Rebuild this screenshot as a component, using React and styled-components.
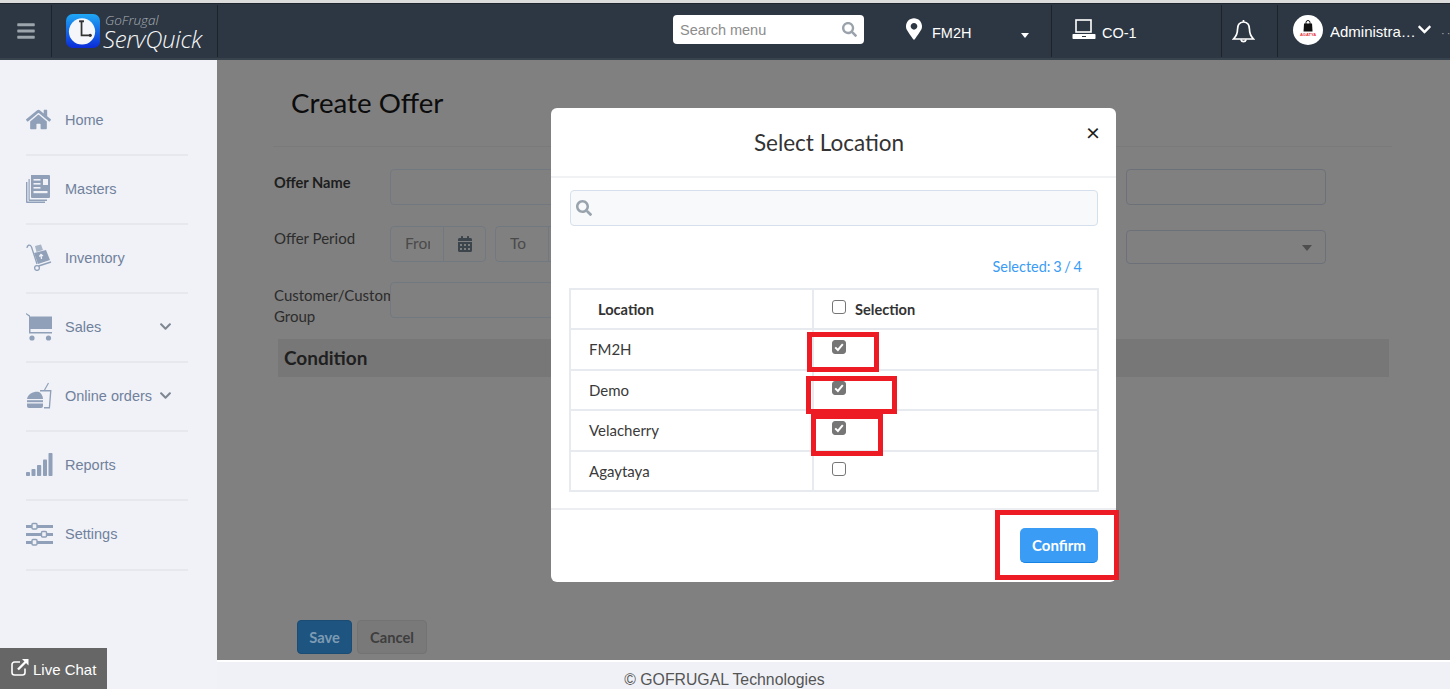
import React from "react";
import styled, { createGlobalStyle } from "styled-components";
import {
  FaBars,
  FaCalendarAlt,
  FaChevronDown,
  FaHome,
  FaMapMarkerAlt,
  FaSearch,
} from "react-icons/fa";

const Global = createGlobalStyle`
  html, body { margin: 0; padding: 0; background: #f0f1f7; }
  * { box-sizing: border-box; }
`;

const Page = styled.div`
  position: relative;
  width: 1450px;
  height: 689px;
  overflow: hidden;
  display: flex;
  flex-direction: column;
  font-family: "Liberation Sans", Arial, sans-serif;
  background: #f0f1f7;
  border-top: 3px solid #dcdcdc;
`;

const Header = styled.header`
  height: 57px;
  flex: none;
  display: flex;
  align-items: stretch;
  background: #2d3743;
  border-top: 1px solid #20262e;
  border-bottom: 2px solid #39434e;
  color: #fff;
`;

const HeadCell = styled.div`
  width: ${(p) => p.$w}px;
  flex: none;
  display: flex;
  align-items: center;
  padding-left: ${(p) => p.$pad || 0}px;
  border-right: ${(p) => (p.$noLine ? "none" : "1px solid #1d232b")};
  margin: 1px 0;
`;

const Burger = styled(FaBars)`
  color: #9ca4ac;
  width: 20px;
  height: 20px;
`;

const LogoMark = styled.svg`
  width: 34px;
  height: 34px;
  flex: none;
`;

const LogoText = styled.div`
  display: flex;
  flex-direction: column;
  margin-left: 3px;
  font-family: "Open Sans", sans-serif;
  font-style: italic;
  font-weight: 300;
`;

const LogoTop = styled.span`
  font-size: 13.5px;
  line-height: 14px;
  color: #aab0b6;
  padding-left: 2px;
  margin-top: 1px;
`;

const LogoMain = styled.span`
  font-size: 24px;
  line-height: 24px;
  letter-spacing: -0.3px;
  color: #f6f8fa;
`;

const Spacer = styled.div`
  flex: 1;
`;

const SearchMenu = styled.div`
  width: 191px;
  height: 29px;
  flex: none;
  display: flex;
  align-items: center;
  justify-content: space-between;
  align-self: center;
  padding: 0 7px;
  background: #fff;
  border-radius: 4px;
  color: #8c8c8c;
  font-size: 14.5px;
  margin-top: -3px;
  margin-right: 42px;
`;

const SearchGlyph = styled(FaSearch)`
  width: 15px;
  height: 15px;
  color: #9aa3ab;
`;

const Pin = styled(FaMapMarkerAlt)`
  width: 16px;
  height: 22px;
  margin-top: -5px;
  color: #fff;
`;

const HeadText = styled.span`
  font-size: 14.5px;
  color: #fff;
  margin-left: ${(p) => p.$ml || 0}px;
  margin-top: 3px;
`;

const HeadCaret = styled.span`
  width: 0;
  height: 0;
  margin-left: 50px;
  margin-top: 8px;
  border-left: 4.5px solid transparent;
  border-right: 4.5px solid transparent;
  border-top: 5px solid #fff;
`;

const Monitor = styled.svg`
  width: 24px;
  height: 22px;
  margin-top: -3px;
  flex: none;
`;

const BellIcon = styled.svg`
  width: 23px;
  height: 25px;
  flex: none;
  margin-top: 1px;
`;

const Avatar = styled.div`
  width: 30px;
  height: 30px;
  border-radius: 50%;
  background: #fff;
  flex: none;
  display: flex;
  flex-direction: column;
  align-items: center;
  padding-top: 5px;
  margin-top: -2px;
`;

const AvatarBag = styled.svg`
  width: 10px;
  height: 12px;
  flex: none;
`;

const AvatarName = styled.span`
  font-size: 4px;
  line-height: 6px;
  font-weight: 700;
  color: #e8323c;
`;

const UserName = styled.span`
  width: 87px;
  flex: none;
  margin-left: 7px;
  font-size: 15px;
  white-space: nowrap;
  overflow: hidden;
  text-overflow: ellipsis;
`;

const UserChevron = styled(FaChevronDown)`
  width: 15px;
  height: 15px;
  flex: none;
  margin-top: -3px;
`;

const MoreDots = styled.span`
  flex: none;
  margin-left: 9px;
  margin-top: 3px;
  color: #aab0b6;
  font-size: 11px;
  letter-spacing: 2px;
`;

const Body = styled.div`
  flex: 1;
  min-height: 0;
  display: flex;
`;

const Sidebar = styled.nav`
  width: 217px;
  flex: none;
  padding: 27px 29px 0 26px;
  background: #f0f2f8;
`;

const NavItem = styled.div`
  height: 69px;
  display: flex;
  align-items: center;
  border-bottom: 2px solid #e6e8ee;
  color: #71819b;
  font-size: 14.5px;
  padding-bottom: 2px;

  &:last-child {
    height: 70px;
  }
`;

const NavIcon = styled.span`
  width: 39px;
  flex: none;
  display: flex;
  color: #8fa0b8;
`;

const NavChevron = styled(FaChevronDown)`
  width: 13px;
  height: 13px;
  color: #7f8791;
  margin-left: auto;
  margin-right: 16px;
`;

const Right = styled.div`
  flex: 1;
  min-width: 0;
  display: flex;
  flex-direction: column;
`;

const Main = styled.main`
  position: relative;
  flex: 1;
  min-height: 0;
  display: flex;
  flex-direction: column;
  padding: 0 58px 6px 56px;
  background: #808080;
  font-family: Lato, sans-serif;
  color: #262626;
`;

const PageHead = styled.div`
  height: 87px;
  flex: none;
  padding: 26px 0 0 18px;
  border-bottom: 1px solid #7a7a7a;
`;

const PageTitle = styled.h1`
  margin: 0;
  font-size: 27.7px;
  line-height: 34px;
  font-weight: 400;
  color: #0c0c0c;
`;

const FormRow = styled.div`
  display: flex;
  align-items: flex-start;
  margin-top: ${(p) => p.$top}px;
`;

const FieldLabel = styled.label`
  width: 117px;
  flex: none;
  padding-top: ${(p) => p.$pt || 3}px;
  padding-left: 1px;
  font-size: ${(p) => (p.$bold ? 14.6 : 15)}px;
  line-height: 21px;
  font-weight: ${(p) => (p.$bold ? 700 : 400)};
  color: ${(p) => (p.$bold ? "#1d1d1d" : "#2c2c2c")};
  overflow: hidden;
`;

const TextBox = styled.div`
  width: ${(p) => p.$w || 400}px;
  height: 36px;
  flex: none;
  border: 1px solid #727880;
  border-radius: 4px;
`;

const DateGroup = styled.div`
  display: flex;
  width: 96px;
  height: 36px;
  flex: none;
  margin-right: 9px;
  border: 1px solid #727880;
  border-radius: 4px;
  font-size: 15.5px;
  color: #4a4a4a;
`;

const DateInput = styled.span`
  width: 53px;
  flex: none;
  padding: 6px 13px 0 14px;
  line-height: 20px;
  border-right: 1px solid #727880;
`;

const DateValue = styled.span`
  display: block;
  overflow: hidden;
  white-space: nowrap;
`;

const DateAddon = styled.span`
  flex: 1;
  display: flex;
  align-items: center;
  justify-content: center;
  color: #3c444c;
`;

const SideField = styled.div`
  width: 200px;
  height: ${(p) => p.$h}px;
  margin: ${(p) => p.$mt || 0}px 66px 0 auto;
  flex: none;
  display: flex;
  align-items: center;
  justify-content: flex-end;
  padding-right: 13px;
  border: 1px solid #6c7179;
  border-radius: 4px;
`;

const SelectCaret = styled.span`
  width: 0;
  height: 0;
  margin-top: 2px;
  border-left: 5.5px solid transparent;
  border-right: 5.5px solid transparent;
  border-top: 6px solid #4e4e4e;
`;

const SectionBar = styled.div`
  height: 38px;
  margin: 12px 3px 0 5px;
  padding-left: 6px;
  background: #777;
  font-size: 19px;
  line-height: 38px;
  font-weight: 700;
  color: #1f1f1f;
`;

const Actions = styled.div`
  display: flex;
  gap: 5px;
  margin-top: auto;
  padding-left: 24px;
`;

const GhostButton = styled.div`
  width: ${(p) => (p.$primary ? 55 : 70)}px;
  height: 34px;
  display: flex;
  align-items: center;
  justify-content: center;
  border-radius: 4px;
  font-size: 14.7px;
  font-weight: 700;
  background: ${(p) => (p.$primary ? "#1d5480" : "#797979")};
  color: ${(p) => (p.$primary ? "#7d9bb3" : "#3e3e3e")};
  border: 1px solid ${(p) => (p.$primary ? "#1a4c74" : "#737373")};
`;

const Modal = styled.section`
  position: absolute;
  left: 334px;
  top: 48px;
  width: 565px;
  height: 474px;
  display: flex;
  flex-direction: column;
  background: #fff;
  border-radius: 6px;
  color: #333;
`;

const ModalHead = styled.div`
  position: relative;
  height: 70px;
  flex: none;
  display: flex;
  align-items: center;
  justify-content: center;
  padding-top: 1px;
  border-bottom: 2px solid #f1f2f4;
`;

const ModalTitle = styled.h2`
  margin: 0 0 0 -9px;
  font-size: 22.5px;
  font-weight: 400;
  color: #333;
`;

const CloseMark = styled.span`
  position: absolute;
  right: 16px;
  top: 11px;
  font-size: 24px;
  line-height: 26px;
  font-weight: 400;
  color: #1c1c1c;
`;

const ModalBody = styled.div`
  flex: 1;
  padding: 12px 18px 0 19px;
`;

const ModalSearch = styled.div`
  height: 36px;
  display: flex;
  align-items: center;
  padding-left: 5px;
  background: #f8f9fa;
  border: 1px solid #d6e0ec;
  border-radius: 4px;
`;

const ModalSearchGlyph = styled(FaSearch)`
  width: 16px;
  height: 16px;
  color: #98a3ad;
`;

const Counter = styled.div`
  height: 62px;
  padding: 31px 16px 0 0;
  text-align: right;
  font-size: 14.5px;
  word-spacing: -1px;
  line-height: 20px;
  color: #3a9cf5;
`;

const LocTable = styled.table`
  width: 528px;
  margin-left: -1px;
  border-collapse: collapse;
  table-layout: fixed;
  font-size: 15px;
`;

const HeadCellT = styled.th`
  height: 40px;
  padding: 0 0 0 ${(p) => p.$pl || 27}px;
  text-align: left;
  font-size: 14.6px;
  font-weight: 700;
  color: #333;
  border: 2px solid #e7eaee;
`;

const Cell = styled.td`
  height: ${(p) => p.$h}px;
  padding: 0 0 1px 18px;
  border: 2px solid #e7eaee;
  color: #3a3a3a;
`;

const HeadCheck = styled.span`
  display: inline-flex;
  align-items: center;
  gap: 9px;
`;

const Check = styled.span`
  display: flex;
  align-items: center;
  justify-content: center;
  width: 14px;
  height: 14px;
  flex: none;
  margin-top: ${(p) => p.$mt || 0}px;
  border-radius: 3px;
  background: ${(p) => (p.$on ? "#767676" : "#fff")};
  border: 1px solid #767676;
`;

const ModalFoot = styled.div`
  height: 74px;
  flex: none;
  display: flex;
  align-items: flex-start;
  justify-content: flex-end;
  padding: 18px 18px 0 0;
  border-top: 2px solid #eceef1;
`;

const ConfirmButton = styled.button`
  width: 78px;
  height: 35px;
  padding: 0;
  background: #3a9cf5;
  border: none;
  border-bottom: 1px solid #1582e4;
  border-radius: 5px;
  color: #fff;
  font-family: Lato, sans-serif;
  font-size: 15px;
  font-weight: 700;
`;

const Callout = styled.div`
  position: absolute;
  left: ${(p) => p.$x}px;
  top: ${(p) => p.$y}px;
  width: ${(p) => p.$w}px;
  height: ${(p) => p.$h}px;
  border: 5px solid #ed1c24;
  pointer-events: none;
`;

const Footer = styled.footer`
  height: 29px;
  flex: none;
  display: flex;
  align-items: center;
  justify-content: center;
  background: #f0f1f7;
  border-top: 2px solid #fff;
  font-size: 15.8px;
  color: #555;
  padding: 8px 218px 0 0;
`;

const LiveChat = styled.div`
  position: absolute;
  left: 0;
  bottom: 0;
  width: 107px;
  height: 41px;
  display: flex;
  align-items: center;
  gap: 4px;
  padding: 2px 0 0 11px;
  background: #666;
  color: #fff;
  font-size: 15px;
`;

const ChatIcon = styled.svg`
  width: 18px;
  height: 18px;
  flex: none;
  margin-top: -5px;
`;

const Tick = () => (
  <svg width="10" height="10" viewBox="0 0 10 10">
    <path d="M1.2 5.4 L3.9 8 L8.8 2.2" fill="none" stroke="#fff" strokeWidth="2" />
  </svg>
);

const MastersIcon = () => (
  <svg width="25" height="28" viewBox="0 0 25 28" fill="#8fa0b8">
    <path d="M5 0h18a1 1 0 0 1 1 1v21a1 1 0 0 1-1 1H6a1 1 0 0 1-1-1z" />
    <path d="M2.5 4h1.2v20.5H21V26H3.5a1 1 0 0 1-1-1z" />
    <path d="M0 7h1.4v19.5H19V28H1a1 1 0 0 1-1-1z" />
    <g fill="#f0f2f8">
      <rect x="7.5" y="4" width="7" height="1.6" />
      <rect x="7.5" y="8" width="7" height="1.6" />
      <rect x="7.5" y="12" width="7" height="1.6" />
      <rect x="17" y="4" width="5" height="6" />
      <rect x="7.5" y="16" width="14" height="2.2" />
    </g>
  </svg>
);

const InventoryIcon = () => (
  <svg width="26" height="27" viewBox="0 0 26 27" fill="none">
    <path d="M1 4 C1 1 4 0 5.5 3 L11 20" stroke="#8fa0b8" strokeWidth="1.3" />
    <path d="M12.5 22 L25 18" stroke="#8fa0b8" strokeWidth="1.5" />
    <circle cx="11" cy="24" r="2.4" stroke="#8fa0b8" strokeWidth="1.3" />
    <path d="M8 9 L20 6 L24 16 L12 20 Z" fill="#8fa0b8" />
    <path d="M9 2 L15 0.5 L17 6 L10.5 8 Z" fill="#a8b5c7" />
    <path d="M15.5 15 L15 11 M13.3 12.5 L15 10.5 L17 12" stroke="#f0f2f8" strokeWidth="1.3" />
  </svg>
);

const CartIcon = () => (
  <svg width="27" height="28" viewBox="0 0 27 28" fill="#8fa0b8">
    <path d="M0 0 L4 2.5 L4 3.5 L26 3.5 L26 16 L4.5 16 L4.5 19 L26 19 L26 20.5 L3 20.5 L3 3.5 L0 1.2 Z" />
    <circle cx="6" cy="25" r="2.6" />
    <circle cx="22.5" cy="25" r="2.6" />
  </svg>
);

const OrdersIcon = () => (
  <svg width="26" height="28" viewBox="0 0 26 28" fill="#8fa0b8">
    <path d="M1 17 C2 11 9 9 13 10 C15 11 17 14 17 17 Z" />
    <rect x="1" y="18.2" width="16" height="2" />
    <path d="M1 21.5 H17 V24 Q17 26 15 26 H3 Q1 26 1 24 Z" />
    <path d="M14 8 H25.5 L24 26.5 H18 L18 25 H22.8 L24 9.5 H14 Z" />
    <path d="M18.5 8 L22.5 1" stroke="#8fa0b8" strokeWidth="1.2" fill="none" />
  </svg>
);

const ReportsIcon = () => (
  <svg width="27" height="24" viewBox="0 0 27 24" fill="#8fa0b8">
    <rect x="0" y="19" width="4" height="4" rx="0.8" />
    <rect x="5.5" y="16" width="4" height="7" rx="0.8" />
    <rect x="11" y="12" width="4.2" height="11" rx="0.8" />
    <rect x="17" y="6.5" width="4" height="16.5" rx="0.8" />
    <rect x="22.5" y="0" width="4" height="23" rx="0.8" />
  </svg>
);

const SettingsIcon = () => (
  <svg width="27" height="24" viewBox="0 0 27 24">
    <g fill="#8fa0b8">
      <rect x="0" y="3" width="27" height="3" />
      <rect x="0" y="11" width="27" height="3" />
      <rect x="0" y="19" width="27" height="3" />
    </g>
    <g fill="#f0f2f8" stroke="#8fa0b8" strokeWidth="1.4">
      <rect x="6" y="1.5" width="5" height="5.5" rx="1" />
      <rect x="15.5" y="9.5" width="5" height="5.5" rx="1" />
      <rect x="6" y="17.5" width="5" height="5.5" rx="1" />
    </g>
  </svg>
);

const navItems = [
  ["Home", <FaHome key="h" size={25} />],
  ["Masters", <MastersIcon key="m" />],
  ["Inventory", <InventoryIcon key="i" />],
  ["Sales", <CartIcon key="s" />, true],
  ["Online orders", <OrdersIcon key="o" />, true],
  ["Reports", <ReportsIcon key="r" />],
  ["Settings", <SettingsIcon key="t" />],
];

const rows = [
  ["FM2H", 41, true],
  ["Demo", 40, true],
  ["Velacherry", 41, true],
  ["Agaytaya", 40, false],
];

export default function App() {
  return (
    <Page>
      <Global />
      <Header>
        <HeadCell $w={52} $pad={16}>
          <Burger />
        </HeadCell>
        <HeadCell $w={166} $pad={14}>
          <LogoMark viewBox="0 0 35 35">
            <defs>
              <linearGradient id="lg" x1="0" y1="0" x2="0" y2="1">
                <stop offset="0" stopColor="#1fa8f5" />
                <stop offset="1" stopColor="#0a2bd8" />
              </linearGradient>
            </defs>
            <rect width="35" height="35" rx="7" fill="url(#lg)" />
            <circle cx="16.5" cy="18" r="13.5" fill="#f4f6fa" />
            <path d="M16 8v14h9" fill="none" stroke="#333" strokeWidth="1.8" />
            <rect x="13.5" y="6.5" width="5" height="2" fill="#333" />
            <circle cx="25" cy="22" r="1.6" fill="#333" />
          </LogoMark>
          <LogoText>
            <LogoTop>GoFrugal</LogoTop>
            <LogoMain>ServQuick</LogoMain>
          </LogoText>
        </HeadCell>
        <Spacer />
        <SearchMenu>
          Search menu
          <SearchGlyph />
        </SearchMenu>
        <HeadCell $w={146}>
          <Pin />
          <HeadText $ml={10}>FM2H</HeadText>
          <HeadCaret />
        </HeadCell>
        <HeadCell $w={170} $pad={20}>
          <Monitor viewBox="0 0 24 22">
            <rect x="4" y="1" width="15" height="12" fill="none" stroke="#fff" strokeWidth="1.6" />
            <rect x="0.5" y="15" width="23" height="5" rx="0.8" fill="#fff" />
            <rect x="10" y="17" width="4" height="1" fill="#2d3743" />
          </Monitor>
          <HeadText $ml={6}>CO-1</HeadText>
        </HeadCell>
        <HeadCell $w={56} $pad={10}>
          <BellIcon viewBox="0 0 23 25" fill="none" stroke="#fff" strokeWidth="1.7">
            <path d="M11.5 3 C7 3 5.5 6.5 5.5 10.5 C5.5 15 4.5 17 1.5 20 H21.5 C18.5 17 17.5 15 17.5 10.5 C17.5 6.5 16 3 11.5 3 Z" />
            <path d="M11.5 3 V1" />
            <path d="M8.8 20.5 a2.8 2.8 0 0 0 5.4 0" />
          </BellIcon>
        </HeadCell>
        <HeadCell $w={172} $pad={15} $noLine>
          <Avatar>
            <AvatarBag viewBox="0 0 10 12">
              <path d="M1 3.5 H9 L9.5 11.5 H0.5 Z" fill="#111" />
              <path d="M3 4 V2.5 a2 2 0 0 1 4 0 V4" fill="none" stroke="#111" strokeWidth="1" />
            </AvatarBag>
            <AvatarName>AGATYA</AvatarName>
          </Avatar>
          <UserName>Administrator</UserName>
          <UserChevron />
          <MoreDots>··</MoreDots>
        </HeadCell>
      </Header>
      <Body>
        <Sidebar>
          {navItems.map(([label, icon, sub]) => (
            <NavItem key={label}>
              <NavIcon>{icon}</NavIcon>
              {label}
              {sub && <NavChevron />}
            </NavItem>
          ))}
        </Sidebar>
        <Right>
          <Main>
            <PageHead>
              <PageTitle>Create Offer</PageTitle>
            </PageHead>
            <FormRow $top={22}>
              <FieldLabel $bold>Offer Name</FieldLabel>
              <TextBox />
              <SideField $h={36} />
            </FormRow>
            <FormRow $top={21}>
              <FieldLabel $pt={2}>Offer Period</FieldLabel>
              <DateGroup>
                <DateInput>
                  <DateValue>From</DateValue>
                </DateInput>
                <DateAddon>
                  <FaCalendarAlt size={16} />
                </DateAddon>
              </DateGroup>
              <DateGroup>
                <DateInput>
                  <DateValue>To</DateValue>
                </DateInput>
                <DateAddon />
              </DateGroup>
              <SideField $h={34} $mt={4}>
                <SelectCaret />
              </SideField>
            </FormRow>
            <FormRow $top={18}>
              <FieldLabel>Customer/Customer Group</FieldLabel>
              <TextBox />
            </FormRow>
            <SectionBar>Condition</SectionBar>
            <Actions>
              <GhostButton $primary>Save</GhostButton>
              <GhostButton>Cancel</GhostButton>
            </Actions>
            <Modal>
              <ModalHead>
                <ModalTitle>Select Location</ModalTitle>
                <CloseMark>×</CloseMark>
              </ModalHead>
              <ModalBody>
                <ModalSearch>
                  <ModalSearchGlyph />
                </ModalSearch>
                <Counter>Selected: 3 / 4</Counter>
                <LocTable>
                  <colgroup>
                    <col width="243" />
                    <col width="285" />
                  </colgroup>
                  <thead>
                    <tr>
                      <HeadCellT>Location</HeadCellT>
                      <HeadCellT $pl={18}>
                        <HeadCheck>
                          <Check $mt={-4} />
                          Selection
                        </HeadCheck>
                      </HeadCellT>
                    </tr>
                  </thead>
                  <tbody>
                    {rows.map(([name, h, on]) => (
                      <tr key={name}>
                        <Cell $h={h}>{name}</Cell>
                        <Cell $h={h}>
                          <Check $on={on} $mt={-4}>
                            {on && <Tick />}
                          </Check>
                        </Cell>
                      </tr>
                    ))}
                  </tbody>
                </LocTable>
              </ModalBody>
              <ModalFoot>
                <ConfirmButton>Confirm</ConfirmButton>
              </ModalFoot>
              <Callout $x={256} $y={224} $w={72} $h={40} />
              <Callout $x={255} $y={268} $w={91} $h={38} />
              <Callout $x={260} $y={306} $w={72} $h={42} />
              <Callout $x={444} $y={402} $w={124} $h={70} />
            </Modal>
          </Main>
          <Footer>© GOFRUGAL Technologies</Footer>
        </Right>
      </Body>
      <LiveChat>
        <ChatIcon viewBox="0 0 18 18" fill="none" stroke="#fff">
          <path d="M14 10.5v4a2.5 2.5 0 0 1-2.5 2.5h-8A2.5 2.5 0 0 1 1 14.5v-8A2.5 2.5 0 0 1 3.5 4H9" strokeWidth="1.6" />
          <path d="M7 11.5 L15 3.5" strokeWidth="2.4" />
          <path d="M11 1 H17.5 V7.5 Z" fill="#fff" stroke="none" />
        </ChatIcon>
        Live Chat
      </LiveChat>
    </Page>
  );
}
